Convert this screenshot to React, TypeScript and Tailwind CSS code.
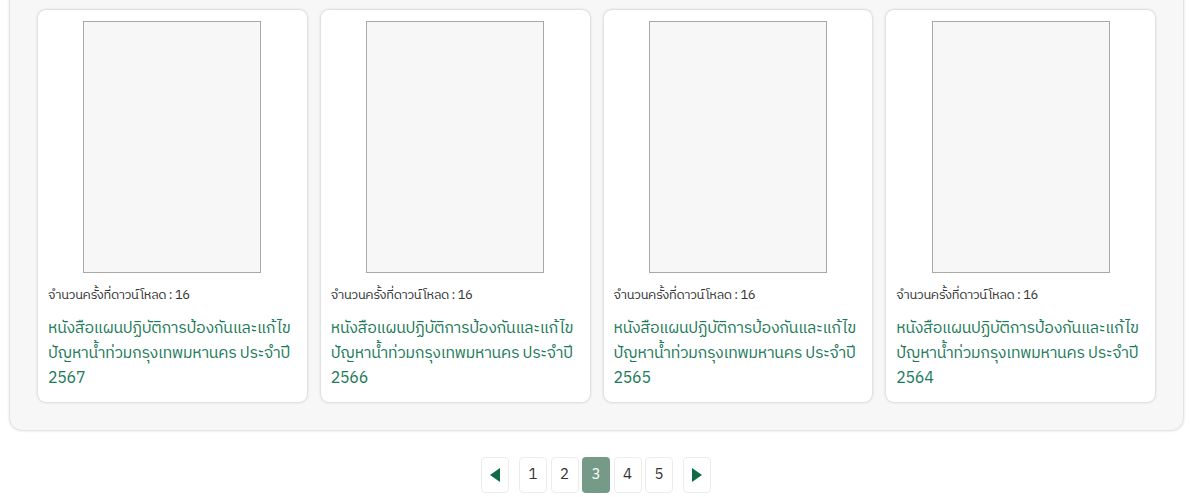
const books = [2567, 2566, 2565, 2564];
const pages = [1, 2, 3, 4, 5];
const current = 3;

function BookCard({ year }: { year: number }) {
  return (
    <div className="bg-white rounded-lg shadow-[0_0_3px_rgba(0,0,0,0.25)] pl-[10px] pr-[6px] pt-[11px] pb-[11px]">
      <div className="flex justify-center pr-[4px]">
        <div className="w-[178px] h-[252px] bg-[#f7f7f7] border border-[#a8a8a8]" />
      </div>
      <p className="mt-[12px] text-[13px] leading-5 tracking-[-0.4px] text-[#333]">จำนวนครั้งที่ดาวน์โหลด : 16</p>
      <p className="mt-[11px] text-[16px] leading-[25px] tracking-[-0.3px] text-[#1b7a58]">
        หนังสือแผนปฏิบัติการป้องกันและแก้ไขปัญหาน้ำท่วมกรุงเทพมหานคร ประจำปี {year}
      </p>
    </div>
  );
}

function Arrow({ dir }: { dir: "left" | "right" }) {
  return (
    <button className="w-[28px] h-[36px] rounded border border-[#ececec] bg-white flex items-center justify-center">
      <svg width="10" height="14" viewBox="0 0 10 14">
        {dir === "left" ? (
          <path d="M10 0 L0 7 L10 14 Z" fill="#0f6b45" />
        ) : (
          <path d="M0 0 L10 7 L0 14 Z" fill="#0f6b45" />
        )}
      </svg>
    </button>
  );
}

export default function App() {
  return (
    <div
      className="w-[1190px] h-[497px] bg-white overflow-hidden"
      style={{ fontFamily: '"IBM Plex Sans Thai", "Noto Sans Thai", "Noto Sans", sans-serif' }}
    >
      <div className="ml-[10px] mr-[7px] -mt-[18px] pt-[28px] pb-[28px] px-[28px] bg-[#f7f7f7] rounded-[12px] shadow-[0_0_3px_rgba(0,0,0,0.3)]">
        <div className="grid grid-cols-4 gap-[14px]">
          {books.map((y) => (
            <BookCard key={y} year={y} />
          ))}
        </div>
      </div>
      <div className="flex justify-center items-center mt-[27px] ml-[2px]">
        <Arrow dir="left" />
        <div className="flex gap-[3.5px] mx-[10px]">
          {pages.map((p) => (
            <button
              key={p}
              className={
                p === current
                  ? "w-[28px] h-[36px] rounded bg-[#769a88] text-white text-[15px]"
                  : "w-[28px] h-[36px] rounded border border-[#ececec] bg-white text-[#333] text-[15px]"
              }
            >
              {p}
            </button>
          ))}
        </div>
        <Arrow dir="right" />
      </div>
    </div>
  );
}
